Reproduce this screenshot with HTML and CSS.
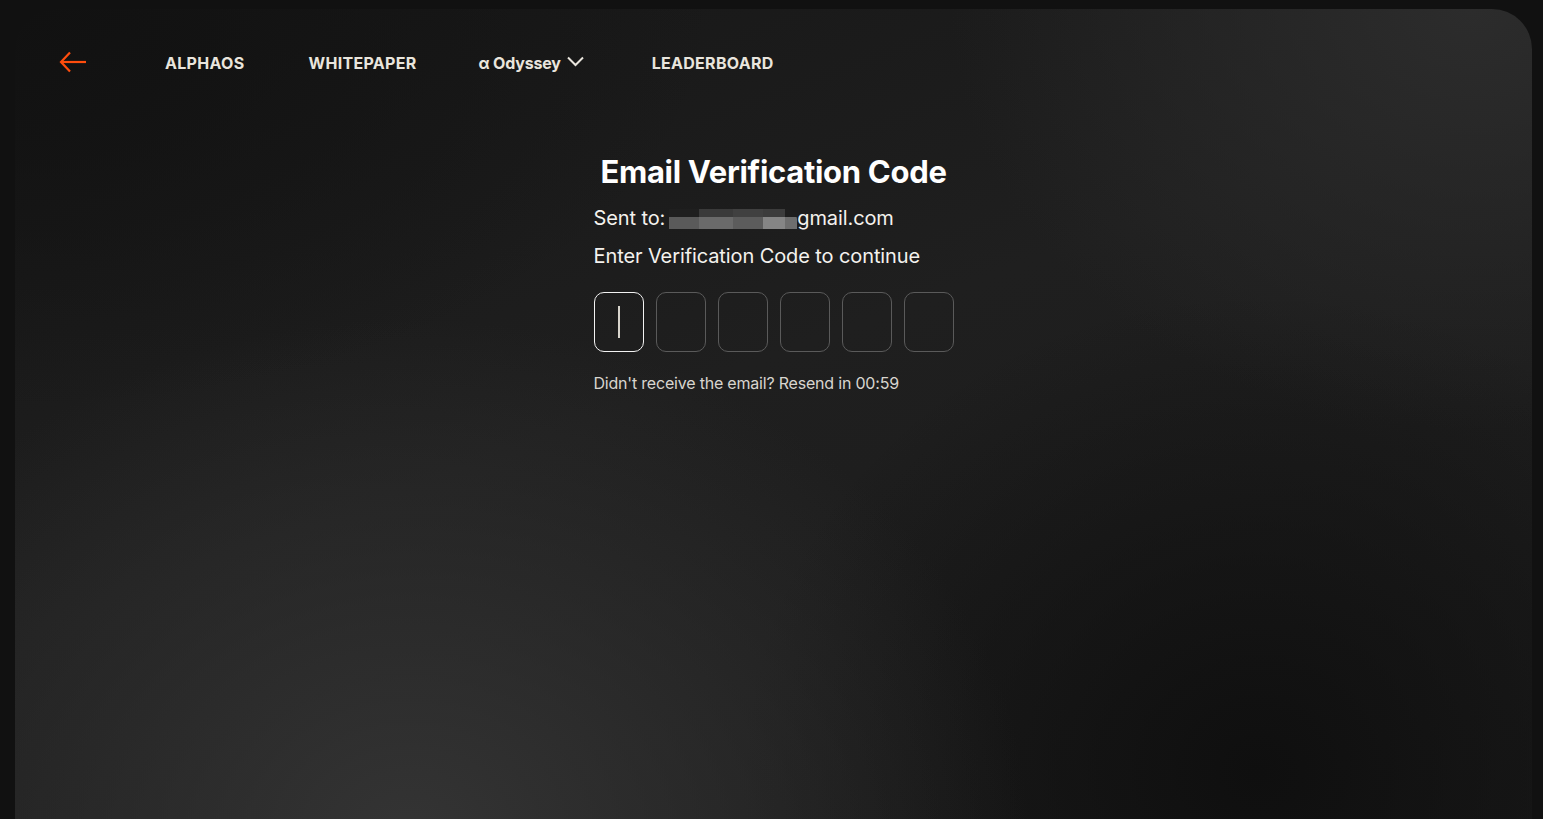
FILE: index.html
```html
<!DOCTYPE html>
<html lang="en">
<head>
<meta charset="utf-8">
<title>Email Verification Code</title>
<link rel="stylesheet" href="styles.css">
</head>
<body>
<div class="panel">
  <nav class="nav">
    <a class="back" href="#" aria-label="Back">
      <svg width="28" height="24" viewBox="0 0 28 24" fill="none" stroke="#ff4d0d" stroke-width="2.2" stroke-linecap="butt" stroke-linejoin="miter">
        <path d="M27 11H2.5"/>
        <path d="M11 1.5L2 11l9 9.5"/>
      </svg>
    </a>
    <ul class="links">
      <li class="link">ALPHAOS</li>
      <li class="link">WHITEPAPER</li>
      <li class="link dropdown">α Odyssey
        <svg class="chev" width="17" height="11" viewBox="0 0 17 11" fill="none" stroke="#e9e5dd" stroke-width="2"><path d="M1 1.5l7.5 7.5L16 1.5"/></svg>
      </li>
      <li class="link">LEADERBOARD</li>
    </ul>
  </nav>

  <main class="verify">
    <h1 class="title">Email Verification Code</h1>
    <p class="line sent">Sent to: <span class="masked"><i class="m m1"></i><i class="m m2"></i><i class="m m3"></i><i class="m m4"></i><i class="m m5"></i></span>gmail.com</p>
    <p class="line">Enter Verification Code to continue</p>
    <div class="codes">
      <div class="box active"><span class="caret"></span></div>
      <div class="box"></div>
      <div class="box"></div>
      <div class="box"></div>
      <div class="box"></div>
      <div class="box"></div>
    </div>
    <p class="resend">Didn't receive the email? Resend in 00:59</p>
  </main>
</div>
</body>
</html>
```

FILE: styles.css
```css
* { box-sizing: border-box; }
html, body {
  margin: 0;
  padding: 0;
  height: 100%;
  overflow: hidden;
  background: #111111;
}
body {
  font-family: Inter, "Noto Sans", sans-serif;
  color: #f2f0ec;
  padding: 9px 11px 0 15px;
}
.panel {
  height: 830px;
  border-radius: 40px 40px 0 0;
  background:
    radial-gradient(ellipse 620px 520px at 26% 100%, rgba(52,52,52,1) 0%, rgba(52,52,52,0.6) 40%, rgba(52,52,52,0) 100%),
    radial-gradient(ellipse 520px 420px at 96% 0%, rgba(44,44,44,1) 0%, rgba(44,44,44,0) 100%),
    radial-gradient(ellipse 520px 480px at 82% 92%, rgba(15,15,15,1) 0%, rgba(15,15,15,0) 100%),
    radial-gradient(ellipse 700px 400px at 0% 0%, rgba(17,17,17,1) 0%, rgba(17,17,17,0) 100%),
    linear-gradient(160deg, #161616 0%, #1f1f1f 45%, #1a1a1a 100%);
}
.nav {
  display: flex;
  align-items: center;
  padding: 41px 0 0 44px;
  height: 66px;
}
.back {
  display: flex;
  width: 28px;
  height: 24px;
}
.links {
  display: flex;
  align-items: center;
  list-style: none;
  margin: 0 0 0 78px;
  padding: 0;
  gap: 64px;
}
.link {
  font-size: 16px;
  font-weight: 700;
  color: #e9e5dd;
  letter-spacing: 0.3px;
  display: flex;
  align-items: center;
  line-height: 24px;
}
.dropdown { gap: 6px; margin-left: -2px; margin-right: 4px; letter-spacing: -0.2px; }
.chev { display: block; margin-top: -2px; }

.verify {
  width: 360px;
  margin: 79px auto 0;
  padding-left: 0;
}
.title {
  margin: 0;
  text-align: center;
  font-size: 31px;
  font-weight: 700;
  letter-spacing: -0.3px;
  line-height: 36px;
  color: #ffffff;
}
.line {
  margin: 0;
  font-size: 20px;
  line-height: 24px;
  color: #f4f2ee;
  letter-spacing: -0.1px;
  white-space: nowrap;
}
.sent { margin-top: 16px; display: flex; align-items: center; }
.line + .line { margin-top: 14px; }
.masked {
  display: inline-flex;
  height: 20px;
  width: 128px;
  margin: 2px 0 0 4px;
}
.m { display: block; height: 100%; }
.m1 { width: 30px; background: linear-gradient(180deg, #1f1f1f 0 40%, #5a5a5a 40% 100%); }
.m2 { width: 34px; background: linear-gradient(180deg, #3a3a3a 0 40%, #6a6a6a 40% 100%); }
.m3 { width: 30px; background: linear-gradient(180deg, #404040 0 40%, #5c5c5c 40% 100%); }
.m4 { width: 22px; background: linear-gradient(180deg, #3c3c3c 0 40%, #858585 40% 100%); }
.m5 { width: 12px; background: linear-gradient(180deg, #1e1e1e 0 40%, #6e6e6e 40% 100%); border-radius: 0 10px 0 0; }

.codes {
  display: flex;
  gap: 12px;
  margin-top: 24px;
}
.box {
  width: 50px;
  height: 60px;
  border: 1px solid #5a5a5a;
  border-radius: 10px;
  display: flex;
  align-items: center;
  justify-content: center;
}
.box.active { border-color: #f2f2f2; }
.caret {
  width: 2px;
  height: 32px;
  background: #d8d4cc;
}
.resend {
  margin: 20px 0 0;
  font-size: 16px;
  line-height: 22px;
  color: #d8d5cf;
  letter-spacing: -0.2px;
}
```
